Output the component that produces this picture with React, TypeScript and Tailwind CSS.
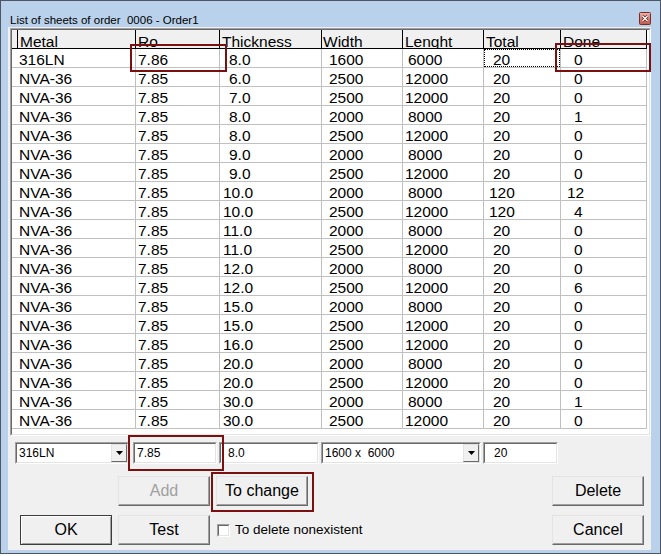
import React from 'react';

const rows: string[][] = [
  ['316LN', '7.86', '8.0', '1600', '6000', '20', '0'],
  ['NVA-36', '7.85', '6.0', '2500', '12000', '20', '0'],
  ['NVA-36', '7.85', '7.0', '2500', '12000', '20', '0'],
  ['NVA-36', '7.85', '8.0', '2000', '8000', '20', '1'],
  ['NVA-36', '7.85', '8.0', '2500', '12000', '20', '0'],
  ['NVA-36', '7.85', '9.0', '2000', '8000', '20', '0'],
  ['NVA-36', '7.85', '9.0', '2500', '12000', '20', '0'],
  ['NVA-36', '7.85', '10.0', '2000', '8000', '120', '12'],
  ['NVA-36', '7.85', '10.0', '2500', '12000', '120', '4'],
  ['NVA-36', '7.85', '11.0', '2000', '8000', '20', '0'],
  ['NVA-36', '7.85', '11.0', '2500', '12000', '20', '0'],
  ['NVA-36', '7.85', '12.0', '2000', '8000', '20', '0'],
  ['NVA-36', '7.85', '12.0', '2500', '12000', '20', '6'],
  ['NVA-36', '7.85', '15.0', '2000', '8000', '20', '0'],
  ['NVA-36', '7.85', '15.0', '2500', '12000', '20', '0'],
  ['NVA-36', '7.85', '16.0', '2500', '12000', '20', '0'],
  ['NVA-36', '7.85', '20.0', '2000', '8000', '20', '0'],
  ['NVA-36', '7.85', '20.0', '2500', '12000', '20', '0'],
  ['NVA-36', '7.85', '30.0', '2000', '8000', '20', '1'],
  ['NVA-36', '7.85', '30.0', '2500', '12000', '20', '0'],
];

const colWidths = ['w-[124px]', 'w-[84px]', 'w-[102px]', 'w-[81px]', 'w-[81px]', 'w-[77px]', 'w-[86px]'];
const headers = ['Metal', 'Ro', 'Thickness', 'Width', 'Lenght', 'Total', 'Done'];

// text offset inside each cell, depends on how many chars the value has
function cellPad(col: number, v: string) {
  switch (col) {
    case 0:
      return 'pl-[7px]';
    case 1:
      return 'pl-[2px]';
    case 2:
      return v.length === 3 ? 'pl-[9px]' : 'pl-[3px]';
    case 3:
      return 'pl-[7px]';
    case 4:
      return v.length === 4 ? 'pl-[5px]' : 'pl-[2px]';
    case 5:
      return v.length === 2 ? 'pl-[9px]' : 'pl-[5px]';
    default:
      return v.length === 1 ? 'pl-[13px]' : 'pl-[6px]';
  }
}

function Sunken({ className, children }: { className: string; children?: React.ReactNode }) {
  return (
    <div className={`border border-t-[#a0a0a0] border-l-[#a0a0a0] border-r-white border-b-white ${className}`}>
      <div className="h-full w-full border border-t-[#696969] border-l-[#696969] border-r-[#e3e3e3] border-b-[#e3e3e3] bg-white flex items-center">
        {children}
      </div>
    </div>
  );
}

function Combo({ className, text }: { className: string; text: string }) {
  return (
    <Sunken className={className}>
      <span className="flex-1 pl-[2px] text-[12px] text-black whitespace-pre">{text}</span>
      <div className="w-[16px] h-full bg-[#f0f0f0] border border-t-[#e3e3e3] border-l-[#e3e3e3] border-r-[#696969] border-b-[#696969] flex items-center justify-center">
        <svg width="7" height="4" viewBox="0 0 7 4">
          <path d="M0 0h7L3.5 4z" fill="#000" />
        </svg>
      </div>
    </Sunken>
  );
}

function Button({ className, label, disabled, isDefault }: { className: string; label: string; disabled?: boolean; isDefault?: boolean }) {
  return (
    <div
      className={`h-[30px] w-[92px] flex items-center justify-center bg-[#f0f0f0] border text-[16px] ${
        isDefault
          ? 'border-[#3c3c3c] shadow-[inset_1px_1px_0_#ffffff,inset_-1px_-1px_0_#a0a0a0]'
          : 'border-t-[#e3e3e3] border-l-[#e3e3e3] border-r-[#696969] border-b-[#696969] shadow-[inset_-1px_-1px_0_#a0a0a0]'
      } ${disabled ? 'text-[#a0a0a0]' : 'text-black'} ${className}`}
    >
      {label}
    </div>
  );
}

export default function App() {
  return (
    <div className="relative w-[661px] h-[556px] bg-white font-['Liberation_Sans',Arial,sans-serif] overflow-hidden">
      <div className="w-[661px] h-[554px] border border-[#4d5761] bg-[#b9d1ea] flex flex-col">
        {/* title bar */}
        <div className="h-[26px] flex items-start">
          <span className="pl-[9px] pt-[12px] text-[11.5px] leading-[14px] text-black whitespace-pre">
            List of sheets of order  0006 - Order1
          </span>
          <svg className="ml-auto mr-[9px] mt-[11px]" width="12" height="13" viewBox="0 0 12 13">
            <defs>
              <linearGradient id="cl" x1="0" y1="0" x2="0" y2="1">
                <stop offset="0" stopColor="#e8b4ac" />
                <stop offset="1" stopColor="#c05848" />
              </linearGradient>
            </defs>
            <rect x="0.5" y="0.5" width="11" height="12" rx="1" fill="url(#cl)" stroke="#7a2c24" />
            <path d="M3.5 4l5 5M8.5 4l-5 5" stroke="#5a1c16" strokeWidth="2.6" />
            <path d="M3.5 4l5 5M8.5 4l-5 5" stroke="#ffffff" strokeWidth="1.4" />
          </svg>
        </div>

        {/* client area */}
        <div className="ml-[7px] w-[643px] h-[523px] bg-[#f0f0f0] flex flex-col">
          {/* grid */}
          <div className="ml-[2px] mt-[1px] w-[641px] h-[408px] border border-t-[#a0a0a0] border-l-[#a0a0a0] border-r-white border-b-white">
            <div className="h-full border border-t-[#696969] border-l-[#696969] border-r-[#e3e3e3] border-b-[#e3e3e3] bg-white overflow-hidden">
              <div className="flex">
                {headers.map((h, i) => (
                  <div
                    key={h}
                    className={`${colWidths[i]} h-[19px] bg-[#f0f0f0] border-r border-b border-black text-[15.5px] leading-[18px] overflow-hidden flex ${i === 3 ? 'pl-[1px]' : 'pl-[2px]'}`}
                  >
                    {i === 0 && <div className="w-[4px] h-full border-r border-black mr-[2px] shrink-0" />}
                    <span className="pt-[3px] text-black">{h}</span>
                  </div>
                ))}
              </div>
              {rows.map((r, ri) => (
                <div key={ri} className="flex">
                  {r.map((v, ci) => (
                    <div
                      key={ci}
                      className={`relative ${colWidths[ci]} h-[19px] border-r border-b border-[#c0c0c0] text-[15.5px] leading-[18px] text-black overflow-hidden pt-[2px] whitespace-pre ${cellPad(ci, v)}`}
                    >
                      {v}
                      {ri === 0 && ci === 5 && (
                        <div className="absolute left-0 top-0 w-[76px] h-[18px] border border-dotted border-black" />
                      )}
                    </div>
                  ))}
                </div>
              ))}
            </div>
          </div>

          {/* edit row */}
          <div className="mt-[6px] h-[22px] flex ml-[7px]">
            <Combo className="w-[114px] h-[22px]" text="316LN" />
            <Sunken className="ml-[4px] w-[84px] h-[22px]">
              <span className="pl-[2px] text-[12px] text-black">7.85</span>
            </Sunken>
            <Sunken className="ml-[2px] w-[100px] h-[22px]">
              <span className="pl-[7px] text-[12px] text-black">8.0</span>
            </Sunken>
            <Combo className="ml-[2px] w-[160px] h-[22px]" text="1600 x  6000" />
            <Sunken className="ml-[2px] w-[75px] h-[22px]">
              <span className="pl-[9px] text-[12px] text-black">20</span>
            </Sunken>
          </div>

          {/* buttons */}
          <div className="mt-[12px] flex">
            <Button className="ml-[110px]" label="Add" disabled />
            <Button className="ml-[6px]" label="To change" />
            <Button className="ml-auto mr-[7px]" label="Delete" />
          </div>
          <div className="mt-[9px] flex items-center">
            <Button className="ml-[12px]" label="OK" isDefault />
            <Button className="ml-[6px]" label="Test" />
            <div className="ml-[7px] w-[13px] h-[13px] border border-t-[#a0a0a0] border-l-[#a0a0a0] border-r-white border-b-white">
              <div className="w-full h-full border border-t-[#696969] border-l-[#696969] border-r-[#e3e3e3] border-b-[#e3e3e3] bg-white" />
            </div>
            <span className="ml-[5px] text-[13.5px] text-black">To delete nonexistent</span>
            <Button className="ml-auto mr-[7px]" label="Cancel" />
          </div>
        </div>
      </div>

      {/* red highlight marks */}
      <div className="absolute left-[130px] top-[44px] w-[97px] h-[28px] border-2 border-[#7b1010]" />
      <div className="absolute left-[555px] top-[43px] w-[96px] h-[29px] border-2 border-[#7b1010]" />
      <div className="absolute left-[128px] top-[435px] w-[96px] h-[36px] border-2 border-[#7b1010]" />
      <div className="absolute left-[211px] top-[472px] w-[103px] h-[40px] border-2 border-[#7b1010]" />
    </div>
  );
}
